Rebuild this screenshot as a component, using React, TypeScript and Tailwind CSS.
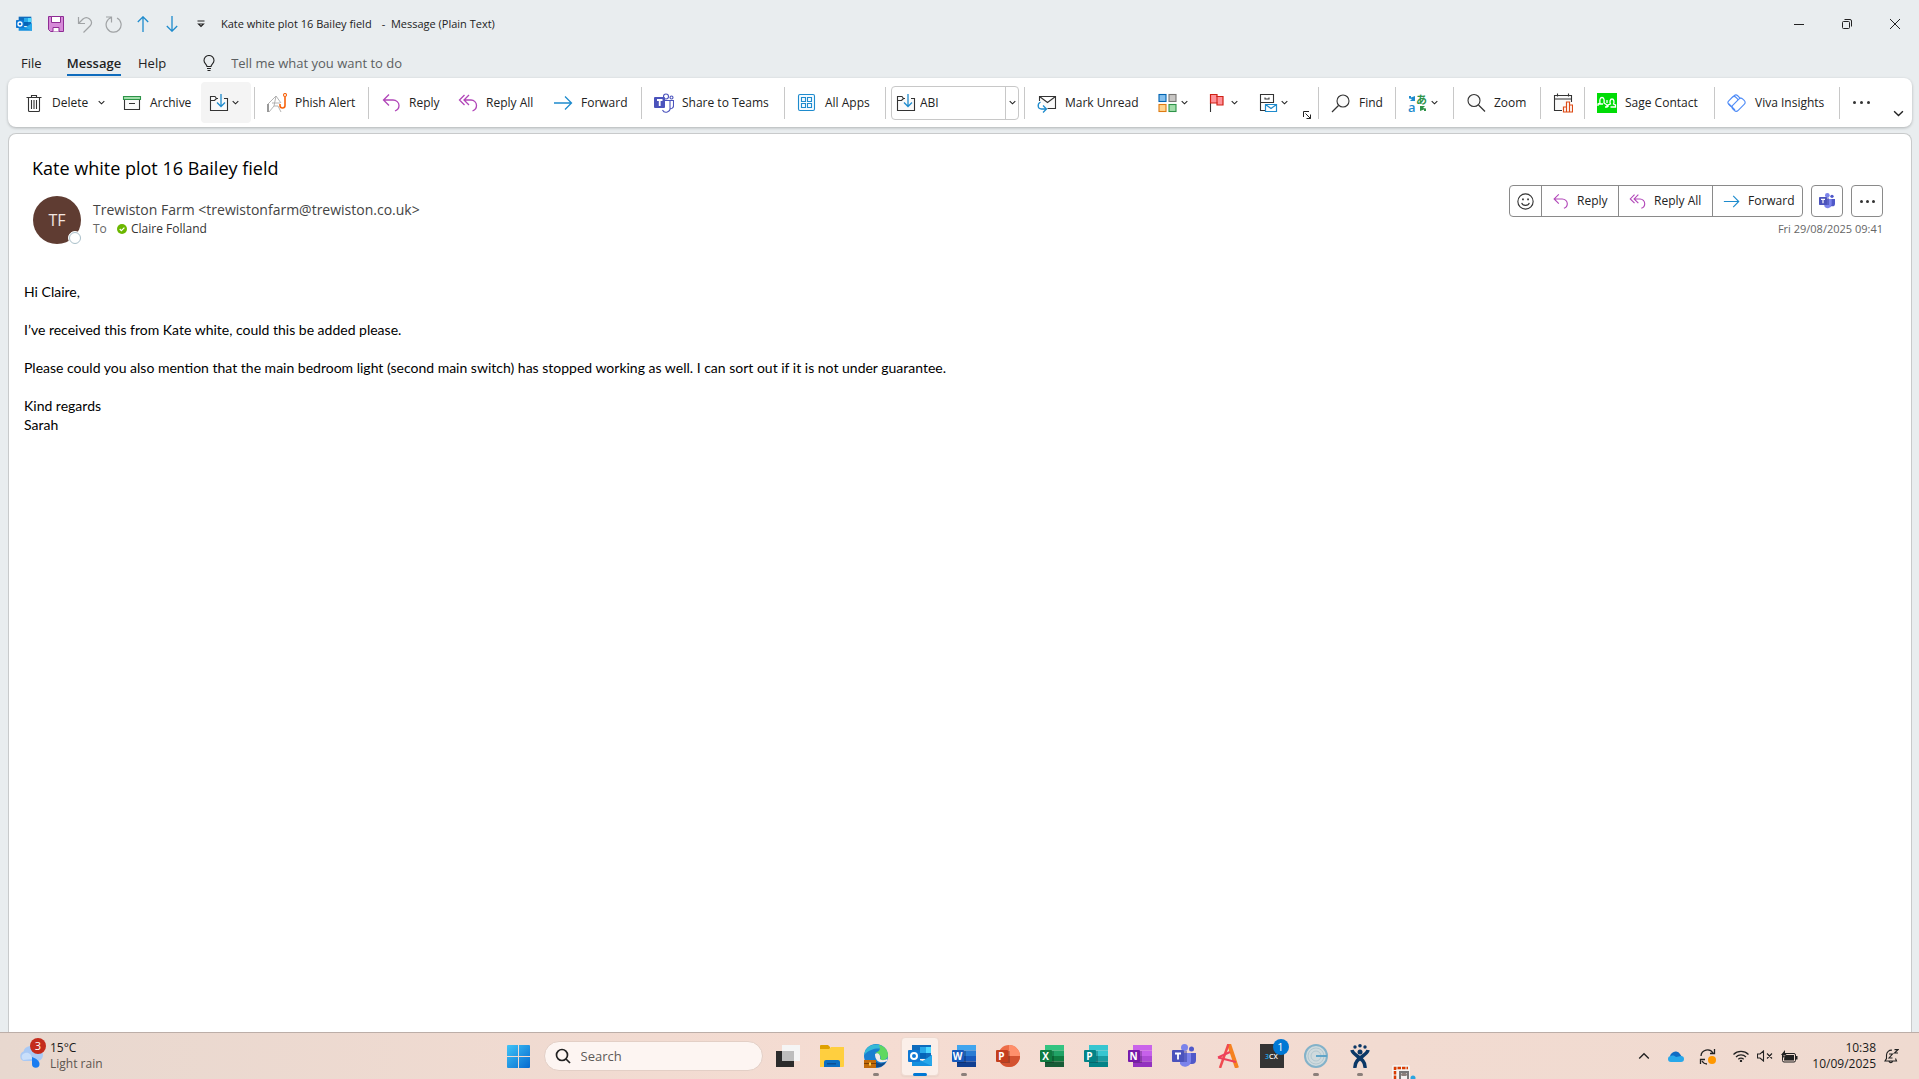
import type { ReactNode } from 'react';

const body = [
  'Hi Claire,',
  '',
  'I’ve received this from Kate white, could this be added please.',
  '',
  'Please could you also mention that the main bedroom light (second main switch) has stopped working as well. I can sort out if it is not under guarantee.',
  '',
  'Kind regards',
  'Sarah',
];

function Svg({ children, className = 'size-5' }: { children: ReactNode; className?: string }) {
  return (
    <svg viewBox="0 0 20 20" fill="none" stroke="#333" strokeWidth="1.1" className={`shrink-0 ${className}`} aria-hidden="true">
      {children}
    </svg>
  );
}

function Chevron({ className = 'size-[7px]', weight = 1.2 }: { className?: string; weight?: number }) {
  return (
    <svg viewBox="0 0 8 8" fill="none" stroke="#222" strokeWidth={weight} className={`shrink-0 ${className}`} aria-hidden="true">
      <path d="M0.8 2.3 4 5.5 7.2 2.3" />
    </svg>
  );
}

const Sep = () => <div className="mx-1 h-8 w-px shrink-0 bg-[#c8c8c8]" />;

function Tool({ icon, label, name, width, menu }: { icon: ReactNode; label?: string; name?: string; width: string; menu?: boolean }) {
  return (
    <button aria-label={name} className={`flex h-[41px] shrink-0 items-center rounded px-2 hover:bg-[#f4f4f4] ${width}`}>
      {icon}
      {label && <span className="ml-2">{label}</span>}
      {menu && <Chevron className={label ? 'ml-2.5 size-[7px]' : 'ml-[3px] size-[7px]'} />}
    </button>
  );
}

const ReplyIcon = ({ className }: { className?: string }) => (
  <Svg className={className}>
    <path stroke="#b146b8" strokeWidth="1.3" d="M8 1.5 2.5 7 8 12.5M2.5 7H12a6 5.5 0 0 1 6 5.5c0 2.5-1.5 4.5-4 5.5" />
  </Svg>
);

const ReplyAllIcon = ({ className }: { className?: string }) => (
  <Svg className={className}>
    <path stroke="#b146b8" strokeWidth="1.3" d="M6.5 2 1.5 7l5 5M11 2 6 7l5 5M6 7h7a5.5 5.5 0 0 1 5.5 5.5c0 2.5-1.5 4.5-4 5.5" />
  </Svg>
);

const ForwardIcon = ({ className }: { className?: string }) => (
  <Svg className={className}>
    <path stroke="#1e8bcd" strokeWidth="1.3" d="M1 10h17.5M12 3.5 18.5 10 12 16.5" />
  </Svg>
);

const FolderMove = () => (
  <Svg>
    <path fill="#fafafa" stroke="none" d="M1.5 4H6l2 2h10.500v11.500h-17z" />
    <path d="M9 5.5H7.5L6 3.5H1.5v14h17v-12H15M1.5 7.500h4l2-2" />
    <path stroke="#1e8bcd" strokeWidth="1.3" d="M12 1v12.5M8 9.5l4 4 4-4" />
  </Svg>
);

const Magnifier = () => (
  <Svg>
    <circle cx="12" cy="8" r="6" fill="#fafafa" />
    <path strokeWidth="1.3" d="M7.5 12.5 1 19" />
  </Svg>
);

const TeamsLine = () => (
  <Svg>
    <circle cx="12" cy="3.5" r="2.5" stroke="#4b53bc" />
    <circle cx="17.5" cy="4.5" r="1.5" stroke="#4b53bc" />
    <path stroke="#4b53bc" d="M11 7.5h5v7a4 4 0 0 1-7.5 2.5M16 7.5h3.500v5a3 3 0 0 1-4 3" />
    <rect x="0" y="4" width="11" height="11" rx="1" fill="#4b53bc" stroke="none" />
    <path stroke="#fff" strokeWidth="1.8" d="M3 7h5.5M5.7 7v6" />
  </Svg>
);

function TeamsSolid({ className }: { className?: string }) {
  return (
    <svg viewBox="0 0 24 24" fill="none" className={className} aria-hidden="true">
      <circle cx="12.5" cy="3.5" r="3.5" fill="#7b83eb" />
      <circle cx="19.5" cy="5" r="2.5" fill="#5059c9" />
      <path fill="#5059c9" d="M16 9h8v7a4 4 0 0 1-4 4h-4z" />
      <path fill="#7b83eb" d="M8 9h11v8a6 6 0 0 1-11 3z" />
      <path fill="#3940a0" d="M7 7h8v11H7z" opacity=".5" />
      <rect y="6" width="12" height="12" rx="1" fill="#4b53bc" />
      <path stroke="#fff" strokeWidth="1.8" d="M3 9.5h6M6 9.5v6" />
    </svg>
  );
}

const OutlookIcon = ({ className }: { className?: string }) => (
  <svg viewBox="0 0 24 24" className={className} aria-hidden="true">
    <path fill="#0f6cbd" d="M4 1h19v14H4z" />
    <path fill="#28a8ea" d="M12 3h6v6h-6z" />
    <path fill="#50d9ff" d="M18 3h5v6h-5z" />
    <path fill="#0364b8" d="M12 9h6v5h-6z" />
    <path fill="#1490df" d="M4 22h20V11l-9 6-11-3z" />
    <path fill="#28a8ea" d="m24 11-10 6.5L24 22z" />
    <rect y="6" width="12" height="12" rx="1" fill="#0f78d4" />
    <circle cx="6" cy="12" r="3" fill="none" stroke="#fff" strokeWidth="2" />
  </svg>
);

function OfficeIcon({ letter, tile, bands, round }: { letter: string; tile: string; bands: string[]; round?: boolean }) {
  return (
    <span className="relative block size-6">
      <svg viewBox="0 0 24 24" className="size-6" aria-hidden="true">
        {round ? (
          <>
            <circle cx="13" cy="12" r="11" fill={bands[0]} />
            <path fill={bands[1]} d="M13 1a11 11 0 0 1 11 11H13z" />
            <path fill={bands[2]} d="M2 12h22a11 11 0 0 1-22 0z" />
          </>
        ) : (
          bands.map((b, i) => <rect key={i} x="5" y={1 + i * 5.5} width="19" height="5.5" fill={b} />)
        )}
        <path fill="#000" opacity=".2" d="M5 7h9v12H5z" />
        <rect y="6" width="12" height="12" rx="1" fill={tile} />
      </svg>
      <span className="absolute top-1.5 left-0 w-3 text-center text-[10px] leading-3 font-bold text-white">{letter}</span>
    </span>
  );
}

function TaskItem({ name, children, open, active }: { name: string; children: ReactNode; open?: boolean; active?: boolean }) {
  return (
    <button aria-label={name} className="relative flex h-[47px] w-11 shrink-0 items-center justify-center">
      {active && <span className="absolute top-1 left-[3px] h-[39px] w-[38px] rounded border border-[#eedad0] bg-[#fbefe9] shadow-xs" />}
      <span className="relative">{children}</span>
      {active && <span className="absolute bottom-1 left-[15px] h-[3px] w-3.5 rounded-full bg-[#0078d4]" />}
      {open && <span className="absolute bottom-1 left-[19px] h-[3px] w-1.5 rounded-full bg-[#8b7f7a]" />}
    </button>
  );
}

function TitleBar() {
  return (
    <header className="flex h-12 items-center pl-4 text-[11px]">
      <OutlookIcon className="size-4" />
      <button aria-label="Save" className="ml-4">
        <svg viewBox="0 0 16 16" className="size-4" aria-hidden="true">
          <path fill="#d68ad8" stroke="#8e2c94" d="M.5.5h15v15H2.5l-2-2z" />
          <path fill="#fff" stroke="#8e2c94" d="M3.5.5h9v6h-9zM5 15.5v-4h6v4" />
        </svg>
      </button>
      <button aria-label="Undo" className="ml-[13px]">
        <svg viewBox="0 0 16 17" fill="none" stroke="#a0a3a5" strokeWidth="1.2" className="h-[17px] w-4" aria-hidden="true">
          <path d="M1.5 1v6.5H8M1.5 7.5 6 3a5 5 0 0 1 7.5 6.5L6.5 16.5" />
        </svg>
      </button>
      <button aria-label="Redo" className="ml-3">
        <svg viewBox="0 0 17 17" fill="none" stroke="#a0a3a5" strokeWidth="1.2" className="size-[17px]" aria-hidden="true">
          <path d="M1 1h5.500v5.500M6.500 1.500A7.500 7.500 0 1 0 12 2" />
        </svg>
      </button>
      <button aria-label="Previous item" className="ml-[15px]">
        <svg viewBox="0 0 12 16" fill="none" stroke="#1e8bcd" strokeWidth="1.3" className="h-4 w-3" aria-hidden="true">
          <path d="M6 16V1M.8 6 6 .8 11.2 6" />
        </svg>
      </button>
      <button aria-label="Next item" className="ml-[17px]">
        <svg viewBox="0 0 12 16" fill="none" stroke="#1e8bcd" strokeWidth="1.3" className="h-4 w-3" aria-hidden="true">
          <path d="M6 0v15M.8 10 6 15.2 11.2 10" />
        </svg>
      </button>
      <button aria-label="Customize toolbar" className="ml-[19px]">
        <svg viewBox="0 0 8 8" fill="none" stroke="#222" strokeWidth="1.1" className="size-2" aria-hidden="true">
          <path d="M.5 1h7M1.5 4h5L4 6.5z" />
        </svg>
      </button>
      <h1 className="ml-4 flex gap-2.5">
        <span>Kate white plot 16 Bailey field</span>
        <span className="whitespace-pre">-  Message (Plain Text)</span>
      </h1>
      <div className="ml-auto flex">
        <button aria-label="Minimize" className="flex h-12 w-12 items-center justify-center">
          <span className="h-px w-2.5 bg-[#222]" />
        </button>
        <button aria-label="Restore" className="flex h-12 w-12 items-center justify-center">
          <svg viewBox="0 0 10 10" fill="none" stroke="#222" className="size-2.5" aria-hidden="true">
            <rect x=".5" y="2.5" width="7" height="7" rx="1" />
            <path d="M2.5.5H8A1.5 1.5 0 0 1 9.5 2v5.5" />
          </svg>
        </button>
        <button aria-label="Close" className="flex h-12 w-12 items-center justify-center">
          <svg viewBox="0 0 10 10" stroke="#222" className="size-2.5" aria-hidden="true">
            <path d="m0 0 10 10M10 0 0 10" />
          </svg>
        </button>
      </div>
    </header>
  );
}

function Tabs() {
  return (
    <nav className="flex h-[30px] items-start text-[13px] leading-[22px]">
      <button className="ml-[21px] w-[46px] pt-1 text-left">File</button>
      <button className="w-[54px] border-b-2 border-[#0f6cbd] pt-1 leading-[22px] font-semibold">
        <span className="-mx-2">Message</span>
      </button>
      <button className="ml-[17px] pt-1">Help</button>
      <label className="ml-[37px] flex items-center pt-1">
        <svg viewBox="0 0 12 16" fill="none" stroke="#222" strokeWidth="1.1" className="h-4 w-3" aria-hidden="true">
          <path d="M4 11.5C4 9.5 1 8.5 1 5.5a5 5 0 0 1 10 0c0 3-3 4-3 6zM4 13.5h4M4.5 15.5h3" />
        </svg>
        <input
          aria-label="Tell me what you want to do"
          placeholder="Tell me what you want to do"
          className="ml-4 h-[22px] w-56 bg-transparent outline-none placeholder:text-[#5c5f61]"
        />
      </label>
    </nav>
  );
}

function Ribbon() {
  return (
    <div className="mr-[7px] ml-2 flex h-[49px] items-center rounded-lg bg-white px-2 text-[12px] whitespace-nowrap shadow-[0_1px_3px_rgba(0,0,0,0.25)]">
      <Tool
        width="w-[98px]"
        label="Delete"
        menu
        icon={
          <Svg>
            <path d="M2.5 4.5h15M7.5 4V2.5h5V4M4.5 4.5v13a1 1 0 0 0 1 1h9a1 1 0 0 0 1-1v-13M7.5 7v9M10 7v9M12.5 7v9" />
          </Svg>
        }
      />
      <Tool
        width="w-[87px]"
        label="Archive"
        icon={
          <Svg>
            <path fill="#fafafa" d="M2.5 7v9.5h15V7M7 10.5h6" />
            <path fill="#a1ddaa" stroke="#2d9348" d="M1.5 3.5h17v3h-17z" />
          </Svg>
        }
      />
      <button aria-label="Move" className="flex h-[41px] w-[50px] shrink-0 items-center rounded bg-[#f4f4f4] pl-2">
        <FolderMove />
        <Chevron className="ml-[3px] size-[7px]" />
      </button>
      <div className="-mr-px" />
      <Sep />
      <Tool
        width="w-[105px]"
        label="Phish Alert"
        icon={
          <Svg>
            <path stroke="#aaa" strokeWidth=".9" d="m1 11 8-8 5 7M5 10h8M2 19l5-6h4l3 6M7 13 9 3" />
            <path stroke="#555" d="M1 11v8" strokeWidth="1.2" />
            <circle cx="18" cy="2" r="1.500" stroke="#f7630c" />
            <path stroke="#f7630c" strokeWidth="1.6" d="M18 3.5v9a2.5 2.5 0 0 1-5 0V11" />
          </Svg>
        }
      />
      <Sep />
      <Tool width="w-[77px]" label="Reply" icon={<ReplyIcon />} />
      <Tool width="w-[95px]" label="Reply All" icon={<ReplyAllIcon />} />
      <Tool width="w-[92px]" label="Forward" icon={<ForwardIcon />} />
      <Sep />
      <Tool width="w-[134px]" label="Share to Teams" icon={<TeamsLine />} />
      <Sep />
      <Tool
        width="w-[92px]"
        label="All Apps"
        icon={
          <Svg>
            <rect x="1.5" y="1.5" width="16" height="16" rx="1.5" stroke="#1e8bcd" fill="#f4faff" />
            <path stroke="#1e8bcd" d="M4.5 4.5h4v4h-4zM10.500 4.5h4v4h-4zM4.5 10.500h4v4h-4zM10.500 10.500h4v4h-4z" />
          </Svg>
        }
      />
      <Sep />
      <label className="relative mr-px ml-px flex h-[34px] w-[128px] shrink-0 items-center rounded border border-[#c8c8c8] pl-1">
        <FolderMove />
        <select aria-label="Quick steps" className="ml-1 h-8 w-full appearance-none bg-transparent outline-none">
          <option>ABI</option>
        </select>
        <span className="pointer-events-none absolute inset-y-0 right-0 flex w-[13px] items-center justify-center border-l border-[#c8c8c8]">
          <Chevron />
        </span>
      </label>
      <Sep />
      <Tool
        width="w-[121px]"
        label="Mark Unread"
        icon={
          <Svg>
            <path d="M2.5 8V3.500h16v12h-8M2.5 3.500l8 6 8-6" fill="#fafafa" />
            <path stroke="#1e8bcd" strokeWidth="1.3" d="M3.5 9C0 11 .5 16 4.5 16H9M6 12.5 9.5 16 6 19.5" />
          </Svg>
        }
      />
      <Tool
        width="w-[50px]"
        name="Categorize"
        menu
        icon={
          <Svg>
            <rect x="1" y="1.5" width="7" height="7" fill="#83beec" stroke="#0063b1" />
            <rect x="11" y="1.5" width="7" height="7" fill="#c8c6c4" stroke="#797775" />
            <rect x="1" y="11.5" width="7" height="7" fill="#ffd590" stroke="#dd7a12" />
            <rect x="11" y="11.5" width="7" height="7" fill="#a1ddaa" stroke="#2d9348" />
          </Svg>
        }
      />
      <Tool
        width="w-[50px]"
        name="Follow up"
        menu
        icon={
          <Svg>
            <path d="M2.5 10v9" />
            <path fill="#ff9199" stroke="#cf2015" strokeWidth="1.2" d="M2.5 1.5H9v2h6V12H9v-2H2.5z" />
            <path stroke="#cf2015" d="M9 3v7" />
          </Svg>
        }
      />
      <Tool
        width="w-[50px]"
        name="Rules"
        menu
        icon={
          <Svg>
            <path d="M7 17.5H2.5v-16h13V10M2.5 9.500h13M7 4.5V6h4V4.5" />
            <path fill="#fff" stroke="#1e8bcd" strokeWidth="1.2" d="M7.5 11.5h11v7h-11zM7.5 11.5l5.500 4 5.500-4" />
          </Svg>
        }
      />
      <button aria-label="More options" className="flex h-[33px] w-3.5 shrink-0 items-end pl-[3px]">
        <svg viewBox="0 0 8 8" fill="none" stroke="#222" className="size-2" aria-hidden="true">
          <path d="M.5 6V.5H6M2.5 2.5l5 5M7.5 3.500v4h-4" />
        </svg>
      </button>
      <Sep />
      <Tool width="w-[68px]" label="Find" icon={<Magnifier />} />
      <Sep />
      <Tool
        width="w-[49px]"
        name="Translate"
        menu
        icon={
          <span className="relative block size-5 shrink-0">
            <span className="absolute bottom-0 left-0 text-[13px] leading-3 font-semibold text-[#1e8bcd]">a</span>
            <span className="absolute top-0 left-2 font-['Noto_Sans_CJK_JP',sans-serif] text-[11px] leading-3 font-semibold text-[#2d9348]">あ</span>
            <svg viewBox="0 0 20 20" className="absolute inset-0 size-5" aria-hidden="true">
              <path fill="#1e8bcd" d="M1 3h2v1.500L7 3v5H2l2-2-3-.5z" />
              <path fill="#2d9348" d="M18 18h-2v-1.500L12 18v-5h5l-2 2 3 .5z" />
            </svg>
          </span>
        }
      />
      <Sep />
      <Tool
        width="w-[78px]"
        label="Zoom"
        icon={
          <Svg>
            <circle cx="8" cy="7.5" r="6" fill="#fafafa" />
            <path strokeWidth="1.3" d="m12.5 12 6.5 6.5" />
          </Svg>
        }
      />
      <Sep />
      <Tool
        width="w-[35px]"
        name="Scheduling poll"
        icon={
          <Svg>
            <path fill="#fafafa" d="M9 17.5H1.5v-15h17V9M1.5 6h17M4.5.5v3M15.500.5v3" />
            <path fill="#fff" stroke="#dd4a14" strokeWidth="1.2" d="M10.500 19v-5h3v5zM13.500 19V9h3v10zM16.500 19v-7h3v7z" />
          </Svg>
        }
      />
      <Sep />
      <Tool
        width="w-[121px]"
        label="Sage Contact"
        icon={
          <Svg>
            <path fill="#00dc06" stroke="none" d="M0 0h20v20H0z" />
            <path
              stroke="#fff"
              strokeWidth="1.3"
              d="M1 13v-2l2-1C2.500 7 3 4.500 5 4.500S7.500 7 7 10l3 2v2H8M1 11h5M11 14v-2l2.500-1c-1-2-.5-5 1.500-5s2.500 3 1.500 5l2 1v2h-5M10 7v3"
            />
          </Svg>
        }
      />
      <Sep />
      <Tool
        width="w-[116px]"
        label="Viva Insights"
        icon={
          <Svg>
            <rect x="5" y="3.500" width="10" height="6.500" rx="2.500" transform="rotate(45 10 7)" fill="#fff" stroke="#4f8cf7" />
            <rect x="1" y="5" width="10" height="7" rx="2.500" transform="rotate(-45 6 8.500)" fill="#fff" stroke="#4f8cf7" />
            <rect x="4.500" y="8" width="14" height="7.500" rx="2.800" transform="rotate(-45 11.500 11.700)" fill="#fff" stroke="#4f8cf7" />
            <path stroke="#4f8cf7" d="M1.500 10.500 8 17" />
          </Svg>
        }
      />
      <Sep />
      <button aria-label="More commands" className="flex h-[41px] w-[34px] shrink-0 items-center justify-center gap-1">
        <span className="size-[3px] rounded-full bg-[#333]" />
        <span className="size-[3px] rounded-full bg-[#333]" />
        <span className="size-[3px] rounded-full bg-[#333]" />
      </button>
      <button aria-label="Ribbon display options" className="ml-auto flex h-8 items-end">
        <Chevron className="size-[11px]" weight={1} />
      </button>
    </div>
  );
}

function MessageHeader() {
  return (
    <div className="flex pr-7 pl-[23px]">
      <div className="flex-1">
        <h2 className="pt-[22px] text-[18px] leading-6 text-black">Kate white plot 16 Bailey field</h2>
        <div className="mt-4 ml-px flex">
          <div className="relative flex size-12 items-center justify-center rounded-full bg-[#5f3c32] text-[16px] text-[#f3e6e0]">
            TF
            <span className="absolute -right-px -bottom-px size-3.5 rounded-full border border-white bg-white">
              <span className="block size-full rounded-full border border-[#a9bfc9]" />
            </span>
          </div>
          <div className="ml-3 pt-1">
            <div className="text-[14px] leading-5 text-[#444]">Trewiston Farm &lt;trewistonfarm@trewiston.co.uk&gt;</div>
            <div className="flex items-center text-[12px] leading-[18px] text-[#666]">
              <span className="w-6">To</span>
              <svg viewBox="0 0 10 10" className="size-2.5" aria-hidden="true">
                <circle cx="5" cy="5" r="5" fill="#6bb700" />
                <path d="m2.7 5 1.7 1.7 3-3" fill="none" stroke="#fff" strokeWidth="1.2" />
              </svg>
              <span className="ml-1 text-[#333]">Claire Folland</span>
            </div>
          </div>
        </div>
      </div>
      <div className="flex flex-col items-end pt-[51px] text-[12px]">
        <div className="flex gap-2">
          <div className="flex h-8 divide-x divide-[#8a8a8a] rounded border border-[#8a8a8a]">
            <button aria-label="React" className="flex w-8 items-center justify-center">
              <Svg className="size-[17px]">
                <circle cx="10" cy="10" r="9" strokeWidth="1.3" />
                <path strokeWidth="1.3" d="M5.500 11.500c1 4 8 4 9 0" />
                <path strokeWidth="2" d="M7 6.500v2M13 6.500v2" />
              </Svg>
            </button>
            <button className="flex w-[77px] items-center pl-2.5">
              <ReplyIcon className="size-[17px]" />
              <span className="ml-2">Reply</span>
            </button>
            <button className="flex w-[94px] items-center pl-2.5 whitespace-nowrap">
              <ReplyAllIcon className="size-[17px]" />
              <span className="ml-2">Reply All</span>
            </button>
            <button className="flex w-[89px] items-center pl-2.5">
              <ForwardIcon className="size-[17px]" />
              <span className="ml-2">Forward</span>
            </button>
          </div>
          <button aria-label="Share to Teams" className="flex size-8 items-center justify-center rounded border border-[#8a8a8a]">
            <TeamsSolid className="size-4" />
          </button>
          <button aria-label="More actions" className="flex size-8 items-center justify-center gap-[3px] rounded border border-[#8a8a8a]">
            <span className="size-[3px] rounded-full bg-[#333]" />
            <span className="size-[3px] rounded-full bg-[#333]" />
            <span className="size-[3px] rounded-full bg-[#333]" />
          </button>
        </div>
        <time className="mt-[3px] text-[11px] leading-[18px] text-[#666]">Fri 29/08/2025 09:41</time>
      </div>
    </div>
  );
}

function Taskbar() {
  return (
    <footer className="flex h-[47px] items-center overflow-hidden border-t border-[#bcaea8] bg-linear-to-r from-[#e8d8cf] via-[#f5dcd2] via-45% to-[#efdad0] text-[12px] leading-4 text-[#1a1a1a]">
      <button className="flex flex-1 items-center pl-[18px] text-left">
        <span className="relative">
          <svg viewBox="0 0 26 24" className="h-6 w-[26px]" aria-hidden="true">
            <path fill="#a9c9f5" d="M6 17a5 5 0 0 1-.5-9.500A7 7 0 0 1 18 5a6 6 0 0 1 2 12z" />
            <path fill="#c9dffb" d="M5 16a4 4 0 0 1 2-7c4-1 7 2 7 6z" />
            <path fill="#1a7cf0" d="M14 13c5 2 7.500 4 7.500 7a3.700 3.700 0 0 1-7.500 0z" />
          </svg>
          <span className="absolute -top-1.5 left-3 flex size-4 items-center justify-center rounded-full bg-[#c42b1c] text-[11px] text-white">3</span>
        </span>
        <span className="ml-1.5">
          <span className="block">15°C</span>
          <span className="block text-[#5d5550]">Light rain</span>
        </span>
      </button>
      <div className="flex items-center pl-[5px]">
        <button aria-label="Start" className="flex w-11 shrink-0 justify-center">
          <svg viewBox="0 0 23 23" className="size-[23px]" aria-hidden="true">
            <defs>
              <linearGradient id="win" x1="0" y1="0" x2="1" y2="1">
                <stop stopColor="#3fc4f7" />
                <stop offset="1" stopColor="#0669cf" />
              </linearGradient>
            </defs>
            <path fill="url(#win)" d="M1 0h10v11H0V1a1 1 0 0 1 1-1zM12 0h10a1 1 0 0 1 1 1v10H12zM0 12h11v11H1a1 1 0 0 1-1-1zM12 12h11v10a1 1 0 0 1-1 1H12z" />
          </svg>
        </button>
        <label className="mx-[3px] flex h-[30px] w-[219px] shrink-0 items-center rounded-full border border-[#e3cfc6] bg-[#fdf5f2] pl-2.5">
          <svg viewBox="0 0 16 16" fill="none" stroke="#222" strokeWidth="1.7" className="size-4" aria-hidden="true">
            <circle cx="7" cy="7" r="5.500" />
            <path d="m11 11 4 4" />
          </svg>
          <input aria-label="Search" placeholder="Search" className="ml-2.5 w-40 bg-transparent text-[13px] outline-none placeholder:text-[#5d5a58]" />
        </label>
        <TaskItem name="Task view">
          <svg viewBox="0 0 24 24" className="size-6" aria-hidden="true">
            <path fill="#2b2b2b" d="M0 7h18v16H0z" />
            <path fill="#f5f5f5" d="M6 1h18v16H6z" />
            <path fill="#bdbdbd" d="M6 7h12v10H6z" />
          </svg>
        </TaskItem>
        <TaskItem name="File Explorer">
          <svg viewBox="0 0 24 24" className="size-6" aria-hidden="true">
            <path fill="#dfa000" d="M0 2a1 1 0 0 1 1-1h7l2 2v4H0z" />
            <path fill="#ffcf3f" d="M0 5h9l2-2h13v19a1 1 0 0 1-1 1H0z" />
            <path fill="#0a6fc2" d="M4 23v-5a2 2 0 0 1 2-2h12a2 2 0 0 1 2 2v5z" />
            <path fill="#0a4f94" d="M7 19h9v1.500H7z" />
          </svg>
        </TaskItem>
        <TaskItem name="Edge" open>
          <svg viewBox="0 0 24 24" className="size-6" aria-hidden="true">
            <circle cx="12" cy="12" r="12" fill="#1b7fd0" />
            <path fill="#35b9d6" d="M0 11A12 12 0 0 1 22 6c-6-2-14-3-22 5z" />
            <path fill="#5fd860" d="M15 1c6 1 9 6 9 10 0 4-4 6-8 5 2-4-1-7-5-7 5-2 6-4 4-8z" />
            <path fill="#f5ebe6" d="M11 10c3-2 6 1 5 5 2 2 5 1 7 0v2c-6 3-12 1-12-7z" />
            <path fill="#0f4a8a" d="M11 17c3 3 8 3 11 1-3 5-8 6-11 5z" />
            <path fill="#c26a0a" d="M0 16h12v8H0z" />
            <path fill="#7b3f00" d="M0 19h12v1H0z" />
            <path fill="#ffd24a" d="M5 18.500h2v3H5z" />
          </svg>
        </TaskItem>
        <TaskItem name="Outlook" active>
          <OutlookIcon className="size-6" />
        </TaskItem>
        <TaskItem name="Word" open>
          <OfficeIcon letter="W" tile="#185abd" bands={['#41a5ee', '#2b7cd3', '#185abd', '#103f91']} />
        </TaskItem>
        <TaskItem name="PowerPoint">
          <OfficeIcon letter="P" tile="#c43e1c" round bands={['#ed6c47', '#ff8f6b', '#d35230']} />
        </TaskItem>
        <TaskItem name="Excel">
          <OfficeIcon letter="X" tile="#107c41" bands={['#33c481', '#21a366', '#107c41', '#185c37']} />
        </TaskItem>
        <TaskItem name="Publisher">
          <OfficeIcon letter="P" tile="#038387" bands={['#37c6d0', '#37c6d0', '#1a9ba1', '#038387']} />
        </TaskItem>
        <TaskItem name="OneNote">
          <OfficeIcon letter="N" tile="#7719aa" bands={['#ca64ea', '#c661ea', '#ae4bd5', '#9332bf']} />
        </TaskItem>
        <TaskItem name="Teams">
          <TeamsSolid className="size-6" />
        </TaskItem>
        <TaskItem name="A">
          <svg viewBox="0 0 24 24" fill="none" className="size-6" aria-hidden="true">
            <path stroke="#f58220" strokeWidth="4" d="m13 0 8 24" />
            <path stroke="#f04a50" strokeWidth="2.500" d="M12.500 0 4 24" />
            <path stroke="#ee3f5c" strokeWidth="2" d="M2 13.500 20 18M2 13.500 14 8" />
          </svg>
        </TaskItem>
        <TaskItem name="3CX">
          <span className="flex size-6 items-center justify-center bg-[#343434] text-[7px] leading-none font-semibold text-white">
            <span className="text-[#1ba1e2]">3</span>CX
          </span>
          <span className="absolute -top-[5px] left-[13px] flex size-4 items-center justify-center rounded-full bg-[#0078d4] text-[11px] leading-4 text-white">1</span>
        </TaskItem>
        <TaskItem name="G" open>
          <svg viewBox="0 0 24 24" fill="none" className="size-6" aria-hidden="true">
            <circle cx="12" cy="12" r="11" fill="#cfdadd" stroke="#83b2c9" strokeWidth="2" />
            <circle cx="12" cy="12" r="8" stroke="#b3c8d0" />
            <circle cx="12" cy="12" r="5" stroke="#b3c8d0" />
            <path stroke="#5ea4c8" strokeWidth="2" d="M23 12H12" />
          </svg>
        </TaskItem>
        <TaskItem name="X" open>
          <svg viewBox="0 0 24 24" fill="none" className="size-6" aria-hidden="true">
            <g fill="#0b3766">
              <circle cx="7" cy="3" r="1.700" />
              <circle cx="12" cy="1.800" r="1.800" />
              <circle cx="17" cy="3" r="1.700" />
            </g>
            <path stroke="#0b3766" strokeWidth="3.500" d="M4 6c1 6 14 8 13 18M20 6C19 12 6 14 7 24" />
            <circle cx="12" cy="8" r="2.500" fill="#0b3766" />
          </svg>
        </TaskItem>
        <TaskItem name="Snipping Tool" open>
          <svg viewBox="0 0 24 14" className="mt-8 h-3.5 w-6" aria-hidden="true">
            <rect width="18" height="18" rx="2" fill="#f4f2f0" />
            <path fill="none" stroke="#d83b01" strokeWidth="2.500" strokeDasharray="3.500 1" d="M3 14V3h13" />
            <path fill="none" stroke="#777" strokeWidth="2" d="M8 14V7h8v7" />
            <circle cx="21" cy="13" r="2.500" fill="#2aa5e0" />
          </svg>
        </TaskItem>
      </div>
      <div className="flex flex-1 items-center justify-end pr-5">
        <button aria-label="Hidden icons">
          <Chevron className="size-3 rotate-180" weight={0.9} />
        </button>
        <svg viewBox="0 0 16 11" className="ml-[18px] h-[11px] w-4" aria-hidden="true">
          <path fill="#0f6cc4" d="M3 8A4 4 0 0 1 4 2a5 5 0 0 1 8 1l2 3z" />
          <path fill="#28a8ea" d="M3 11a3 3 0 0 1 0-6c2-1 4 0 5 1l5-1a3 3 0 0 1 0 6z" />
        </svg>
        <svg viewBox="0 0 18 17" fill="none" stroke="#222" strokeWidth="1.3" className="ml-[15px] h-[17px] w-[18px]" aria-hidden="true">
          <path d="M2 8a6.500 6.500 0 0 1 12-3M15.500 1v4.500H11M1.500 16v-4.500H6M3 13c1 1.500 3 3 5 3" />
          <circle cx="13" cy="12" r="4" fill="#ff9800" stroke="none" />
        </svg>
        <svg viewBox="0 0 16 12" fill="none" stroke="#222" strokeWidth="1.2" className="ml-4 h-3 w-4" aria-hidden="true">
          <path d="M.5 4.500a10.500 10.500 0 0 1 15 0M3 7a7 7 0 0 1 10 0M5.300 9.300a4 4 0 0 1 5.400 0" />
          <circle cx="8" cy="11" r="1.200" fill="#222" stroke="none" />
        </svg>
        <svg viewBox="0 0 16 12" fill="none" stroke="#222" strokeWidth="1.1" className="ml-2 h-3 w-4" aria-hidden="true">
          <path d="M.5 4H3l3.500-3v10L3 8H.5zM10 3.500l5 5M15 3.500l-5 5" />
        </svg>
        <svg viewBox="0 0 17 13" className="ml-2 h-[13px] w-[17px]" aria-hidden="true">
          <rect x="1.500" y="3.500" width="13" height="8.500" rx="1.500" fill="none" stroke="#222" />
          <path fill="#222" d="M3.500 5H13v5.500H3zM15 6h1.500v3.500H15zM4 0 0 5h2.500l-1 3.500 4.500-5H4z" />
        </svg>
        <time className="ml-3.5 text-right leading-4">
          <span className="block">10:38</span>
          <span className="block">10/09/2025</span>
        </time>
        <svg viewBox="0 0 15 15" fill="none" stroke="#222" strokeWidth="1.1" className="ml-2 size-[15px]" aria-hidden="true">
          <path d="M8 1.200A5 5 0 0 0 2.500 6v3.500L1 12h11.500l-1-2.500M5 12.500a2 2 0 0 0 3.600 0M5 5h3.500L5 9h3.500M10.500.6H14L10.500 4H14" />
        </svg>
      </div>
    </footer>
  );
}

export default function App() {
  return (
    <div className="flex min-h-screen flex-col bg-[#e9edef] font-['Open_Sans','Noto_Sans',sans-serif] text-[#222]">
      <TitleBar />
      <Tabs />
      <Ribbon />
      <main className="mt-1.5 mr-[7px] ml-2 flex-1 rounded-t-lg border border-b-0 border-[#c8cacb] bg-white">
        <MessageHeader />
        <article className="mt-[38px] pl-[15px] font-['Lato',sans-serif] text-[14px] leading-[19px] text-black">
          {body.map((line, i) => (
            <p key={i} className="min-h-[19px]">
              {line}
            </p>
          ))}
        </article>
      </main>
      <Taskbar />
    </div>
  );
}
